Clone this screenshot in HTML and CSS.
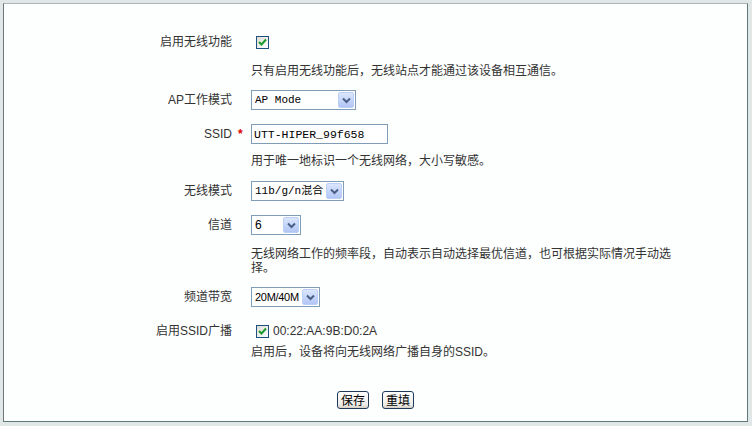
FILE: index.html
```html
<!DOCTYPE html>
<html lang="zh-CN">
<head>
  <meta charset="UTF-8">
  <title>无线基本配置</title>
  <link rel="stylesheet" href="styles.css">
</head>
<body>
  <div class="frame">
    <form class="form">
      <!-- 启用无线 -->
      <div class="row">
        <label class="label">启用无线功能</label><span class="req"></span>
        <span class="check"><svg width="9" height="8" viewBox="0 0 9 8"><path d="M1 4l2.5 2.5L8 1.5" stroke="#1d9a2c" stroke-width="2" fill="none"/></svg></span>
      </div>
      <p class="hint">只有启用无线功能后，无线站点才能通过该设备相互通信。</p>

      <div class="row">
        <label class="label">AP工作模式</label><span class="req"></span>
        <span class="select w-ap">
          <select class="mono"><option>AP Mode</option></select>
          <span class="arrow"><svg width="9" height="7" viewBox="0 0 9 7"><path d="M1 1.5l3.5 3.5L8 1.5" stroke="#4a5f87" stroke-width="2" fill="none"/></svg></span>
        </span>
      </div>

      <div class="row">
        <label class="label">SSID</label><span class="req">*</span>
        <input class="text" type="text" value="UTT-HIPER_99f658">
      </div>
      <p class="hint hint-tight">用于唯一地标识一个无线网络，大小写敏感。</p>

      <div class="row row-gap">
        <label class="label">无线模式</label><span class="req"></span>
        <span class="select w-mode">
          <select class="mono"><option>11b/g/n混合</option></select>
          <span class="arrow"><svg width="9" height="7" viewBox="0 0 9 7"><path d="M1 1.5l3.5 3.5L8 1.5" stroke="#4a5f87" stroke-width="2" fill="none"/></svg></span>
        </span>
      </div>

      <div class="row">
        <label class="label">信道</label><span class="req"></span>
        <span class="select w-chan">
          <select class="sans"><option>6</option></select>
          <span class="arrow"><svg width="9" height="7" viewBox="0 0 9 7"><path d="M1 1.5l3.5 3.5L8 1.5" stroke="#4a5f87" stroke-width="2" fill="none"/></svg></span>
        </span>
      </div>
      <p class="hint">无线网络工作的频率段，自动表示自动选择最优信道，也可根据实际情况手动选择。</p>

      <div class="row">
        <label class="label">频道带宽</label><span class="req"></span>
        <span class="select w-bw">
          <select class="sans narrow"><option>20M/40M</option></select>
          <span class="arrow"><svg width="9" height="7" viewBox="0 0 9 7"><path d="M1 1.5l3.5 3.5L8 1.5" stroke="#4a5f87" stroke-width="2" fill="none"/></svg></span>
        </span>
      </div>

      <div class="row row-short">
        <label class="label">启用SSID广播</label><span class="req"></span>
        <span class="check"><svg width="9" height="8" viewBox="0 0 9 8"><path d="M1 4l2.5 2.5L8 1.5" stroke="#1d9a2c" stroke-width="2" fill="none"/></svg></span>
        <span class="mac">00:22:AA:9B:D0:2A</span>
      </div>
      <p class="hint hint-close">启用后，设备将向无线网络广播自身的SSID。</p>

      <div class="actions">
        <button type="button">保存</button>
        <button type="button">重填</button>
      </div>
    </form>
  </div>
</body>
</html>
```

FILE: styles.css
```css
body {
  margin: 0;
  background-color: #e1e6e6;
  font-family: "Liberation Sans", "Noto Sans CJK SC", sans-serif;
  font-size: 12px;
  color: #333;
}

.frame {
  margin: 3px 4px 4px 3px;
  height: 419px;
  box-sizing: border-box;
  background-color: #fdfefe;
  border-left: 1px solid #6e7878;
  border-top: 1px solid #aab4b4;
  border-right: 1px solid #5d7b7b;
  border-bottom: 1px solid #5d7b7b;
}

.form {
  margin: 0;
  padding-top: 16px;
}

.row {
  display: flex;
  align-items: center;
  height: 24px;
  margin-top: 10px;
}

.row-gap {
  margin-top: 11px;
}

.row-short {
  height: 16px;
  margin-top: 14px;
}

.label {
  width: 228px;
  text-align: right;
  line-height: 14px;
}

.req {
  width: 19px;
  padding-left: 6px;
  box-sizing: border-box;
  color: #d00;
  font-weight: bold;
}

.hint {
  margin: 10px 0 0 247px;
  width: 425px;
  line-height: 14px;
}

.hint-tight {
  margin-top: 8px;
}

.hint-close {
  margin-top: 6px;
}

/* checkbox */
.check {
  display: inline-flex;
  align-items: center;
  justify-content: center;
  width: 13px;
  height: 13px;
  box-sizing: border-box;
  margin-left: 5px;
  border: 1px solid #1c5180;
  background: linear-gradient(135deg, #dcdcd7, #ffffff);
}

.mac {
  margin-left: 4px;
  color: #333;
}

/* select boxes */
.select {
  display: inline-flex;
  align-items: center;
  height: 20px;
  box-sizing: border-box;
  border: 1px solid #7f9db9;
  background-color: #fff;
  padding: 1px;
}

.select select {
  appearance: none;
  -webkit-appearance: none;
  border: none;
  background: transparent;
  flex: 1;
  min-width: 0;
  height: 16px;
  padding: 0 0 0 2px;
  margin: 0;
  color: #000;
  outline: none;
}

.mono {
  font-family: "Liberation Mono", "Noto Sans CJK SC", monospace;
  font-size: 11px;
}

.sans {
  font-family: "Liberation Sans", "Noto Sans CJK SC", sans-serif;
  font-size: 12px;
}

.narrow {
  font-size: 11px;
  letter-spacing: -0.3px;
}

.arrow {
  display: flex;
  align-items: center;
  justify-content: center;
  width: 16px;
  height: 16px;
  box-sizing: border-box;
  border: 1px solid #bccff6;
  border-radius: 2px;
  background: linear-gradient(#dbe6fd, #b2c6f5);
}

.w-ap { width: 105px; }
.w-mode { width: 93px; }
.w-chan { width: 50px; }
.w-bw { width: 69px; }

/* text input */
.text {
  width: 137px;
  height: 20px;
  box-sizing: border-box;
  border: 1px solid #7f9db9;
  padding: 0 2px;
  margin: 0;
  font-family: "Liberation Mono", monospace;
  font-size: 11.5px;
  color: #000;
  outline: none;
}

/* buttons */
.actions {
  display: flex;
  justify-content: center;
  gap: 13px;
  margin-top: 32px;
}

.actions button {
  height: 18px;
  padding: 0 3px;
  border: 1px solid #1c3a5a;
  border-radius: 3px;
  background: linear-gradient(#ffffff, #ecebe6 80%, #d6d0c5);
  font-family: "Noto Sans CJK SC", sans-serif;
  font-size: 12px;
  line-height: 14px;
  color: #000;
  cursor: pointer;
}
```
